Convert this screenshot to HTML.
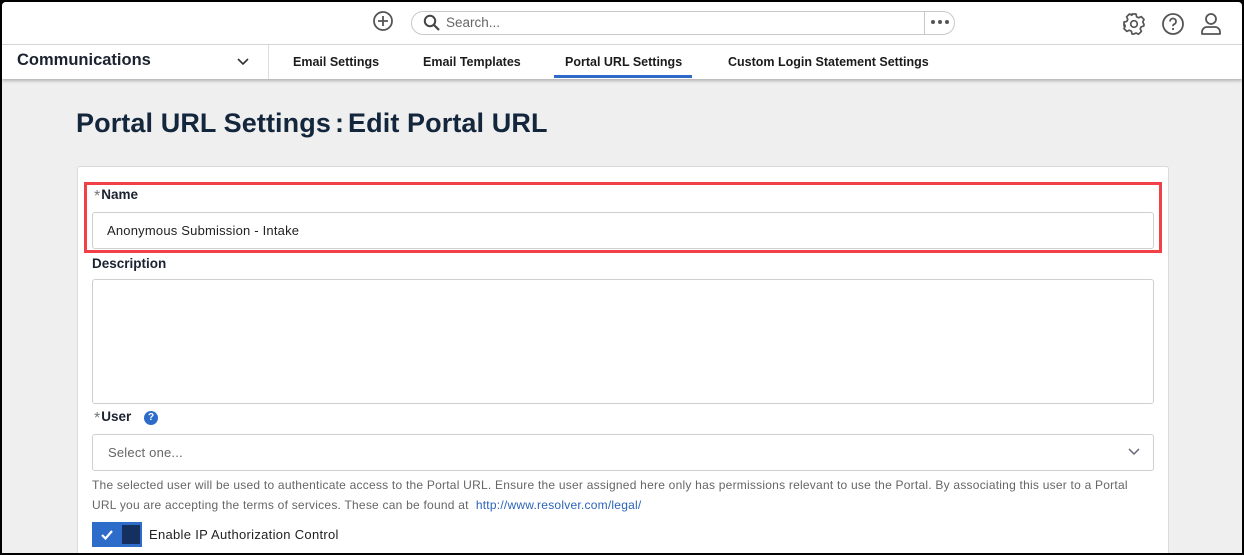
<!DOCTYPE html>
<html><head><style>
*{box-sizing:border-box;margin:0;padding:0}
body{width:1244px;height:555px;overflow:hidden;background:#000;font-family:"Liberation Sans",sans-serif;position:relative}
.frame{position:absolute;left:2px;top:2px;right:2px;bottom:2px;background:#efefef;overflow:hidden;border-radius:4px 4px 0 0}
.top{position:absolute;left:0;top:0;right:0;height:43px;background:#fff;border-bottom:1px solid #d8d8d8}
.nav{position:absolute;left:0;top:43px;right:0;height:34px;background:#fff;box-shadow:0 2px 3px rgba(0,0,0,.25)}
.abs{position:absolute}
.tab{position:absolute;top:10px;font-size:12.5px;font-weight:bold;color:#1b1b1b}
.lbl{position:absolute;font-size:13.5px;font-weight:bold;color:#1b2330}
.ast{color:#777;font-weight:normal;font-size:16px;vertical-align:-2px;margin-right:1px}
.inp{position:absolute;left:90px;width:1062px;background:#fff;border:1px solid #cfcfcf;border-radius:3px}
</style></head><body><div class="frame">
<div class="top">
<svg class="abs" style="left:370px;top:8px" width="22" height="22" viewBox="0 0 22 22"><circle cx="11" cy="11" r="9" fill="none" stroke="#555" stroke-width="1.8"/><path d="M11 6v10M6 11h10" stroke="#555" stroke-width="1.8"/></svg>
<div class="abs" style="left:409px;top:9px;width:544px;height:24px;border:1px solid #c8c8c8;border-radius:12px"></div>
<div class="abs" style="left:922px;top:10px;width:1px;height:22px;background:#c8c8c8"></div>
<svg class="abs" style="left:928px;top:17px" width="20" height="6" viewBox="0 0 20 6"><circle cx="3" cy="3" r="2" fill="#555"/><circle cx="10" cy="3" r="2" fill="#555"/><circle cx="17" cy="3" r="2" fill="#555"/></svg>
<svg class="abs" style="left:421px;top:12px" width="18" height="18" viewBox="0 0 18 18"><circle cx="7" cy="7" r="5.2" fill="none" stroke="#444" stroke-width="2"/><path d="M11 11l5 5" stroke="#444" stroke-width="2.2"/></svg>
<div class="abs" style="left:444px;top:13px;font-size:13.5px;color:#666">Search...</div>
<svg class="abs" style="left:1120px;top:10px" width="24" height="24" viewBox="0 0 24 24"><path d="M10 2h4l.6 2.8 2 1 2.6-1.2 2.8 2.8-1.2 2.6 1 2L22 12.5v0l-.2 1.5-2.6.8-1 2 1.2 2.6-2.8 2.8-2.6-1.2-2 1L12 22h-2l-.6-2.8-2-1-2.6 1.2-2.8-2.8 1.2-2.6-1-2L2 14v-4l2.8-.6 1-2L4.6 4.8l2.8-2.8 2.6 1.2z" fill="none" stroke="#555" stroke-width="1.7" stroke-linejoin="round"/><circle cx="12" cy="12" r="3.3" fill="none" stroke="#555" stroke-width="1.7"/></svg>
<svg class="abs" style="left:1159px;top:10px" width="24" height="24" viewBox="0 0 24 24"><circle cx="12" cy="12" r="10" fill="none" stroke="#555" stroke-width="1.8"/><path d="M9 9.5a3 3 0 1 1 4 2.8c-.8.4-1 1-1 1.8" fill="none" stroke="#555" stroke-width="1.8"/><circle cx="12" cy="17" r="1.1" fill="#555"/></svg>
<svg class="abs" style="left:1197px;top:9px" width="24" height="26" viewBox="0 0 24 26"><circle cx="12" cy="8" r="5" fill="none" stroke="#555" stroke-width="1.8"/><path d="M3 23v-2a5 5 0 0 1 5-5h8a5 5 0 0 1 5 5v2z" fill="none" stroke="#555" stroke-width="1.8" stroke-linejoin="round"/></svg>
</div>
<div class="nav">
<div class="abs" style="left:15px;top:6px;font-size:16.5px;font-weight:bold;color:#1b2330">Communications</div>
<svg class="abs" style="left:234px;top:12px" width="14" height="10" viewBox="0 0 14 10"><path d="M2 2l5 5 5-5" fill="none" stroke="#333" stroke-width="1.6"/></svg>
<div class="abs" style="left:266px;top:0;width:1px;height:34px;background:#ddd"></div>
<div class="tab" style="left:291px">Email Settings</div>
<div class="tab" style="left:421px">Email Templates</div>
<div class="tab" style="left:563px">Portal URL Settings</div>
<div class="abs" style="left:552px;top:30px;width:138px;height:3px;background:#2f6ac9"></div>
<div class="tab" style="left:726px">Custom Login Statement Settings</div>
</div>
<div class="abs" style="left:74px;top:106px;font-size:27px;letter-spacing:0.1px;font-weight:bold;color:#13263c">Portal URL Settings<span style="margin:0 4px">:</span>Edit Portal URL</div>
<div class="abs" style="left:75px;top:164px;width:1092px;height:400px;background:#fff;border:1px solid #dadada;border-radius:3px"></div>
<div class="abs" style="left:82px;top:180px;width:1078px;height:71px;border:3px solid #f14048"></div>
<div class="lbl" style="left:92px;top:185px"><span class="ast">*</span>Name</div>
<div class="inp" style="top:210px;height:37px"></div>
<div class="abs" style="left:105px;top:221px;font-size:13px;letter-spacing:0.2px;color:#222">Anonymous Submission - Intake</div>
<div class="lbl" style="left:90px;top:254px">Description</div>
<div class="inp" style="top:277px;height:125px"></div>
<div class="lbl" style="left:92px;top:407px"><span class="ast">*</span>User</div>
<div class="abs" style="left:142px;top:409px;width:14px;height:14px;border-radius:50%;background:#2d6cc9;color:#fff;font-size:10px;font-weight:bold;text-align:center;line-height:14px">?</div>
<div class="inp" style="top:432px;height:37px"></div>
<div class="abs" style="left:106px;top:443px;font-size:13px;letter-spacing:0.2px;color:#666">Select one...</div>
<svg class="abs" style="left:1126px;top:446px" width="12" height="8" viewBox="0 0 12 8"><path d="M1 1l5 5 5-5" fill="none" stroke="#667" stroke-width="1.5"/></svg>
<div class="abs" style="left:90px;top:474px;width:1060px;font-size:12px;letter-spacing:0.23px;line-height:19.5px;color:#666">The selected user will be used to authenticate access to the Portal URL. Ensure the user assigned here only has permissions relevant to use the Portal. By associating this user to a Portal<br>URL you are accepting the terms of services. These can be found at &nbsp;<span style="color:#2b64b8">http://www.resolver.com/legal/</span></div>
<div class="abs" style="left:90px;top:520px;width:50px;height:25px;background:#2d6cc9"></div>
<div class="abs" style="left:120px;top:523px;width:18px;height:19px;background:#15305e"></div>
<svg class="abs" style="left:98px;top:527px" width="14" height="12" viewBox="0 0 14 12"><path d="M2 6l3.5 3.5L12 2" fill="none" stroke="#fff" stroke-width="2.2"/></svg>
<div class="abs" style="left:147px;top:525px;font-size:13px;letter-spacing:0.3px;color:#222">Enable IP Authorization Control</div>
</div></body></html>
